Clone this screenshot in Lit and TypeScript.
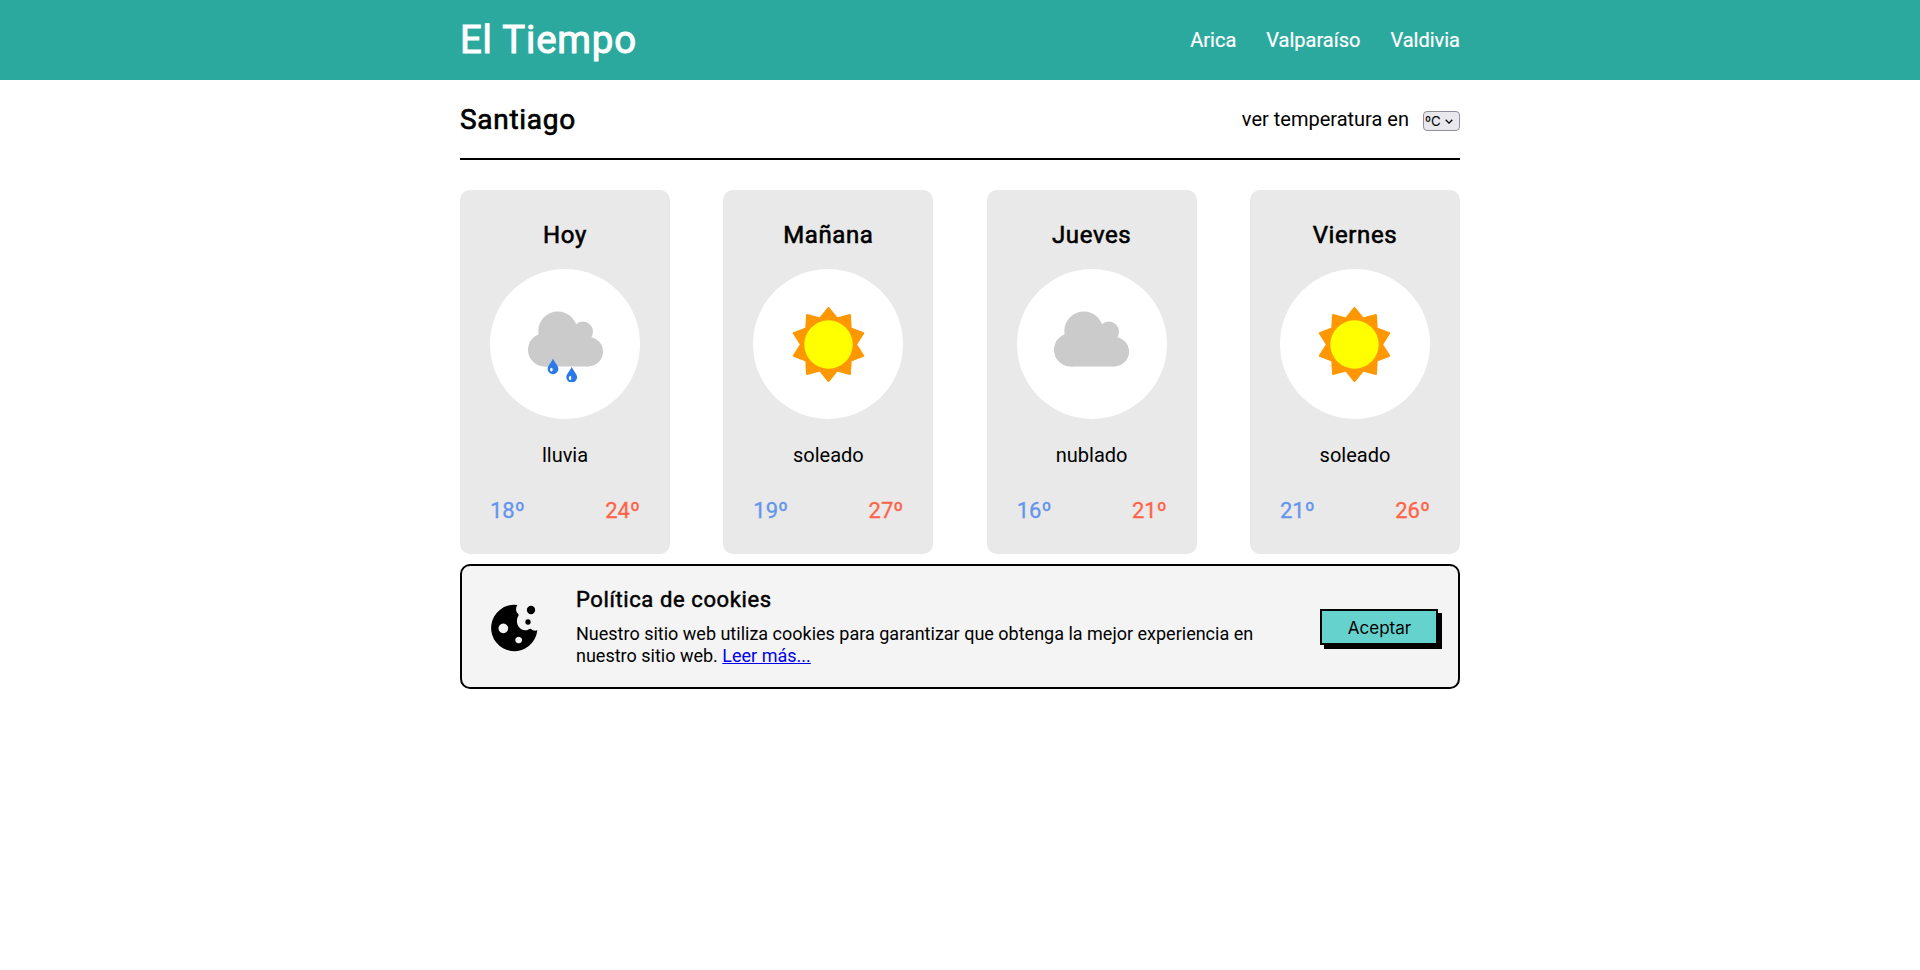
import { LitElement, html, css, svg } from "lit";
import { customElement, property } from "lit/decorators.js";

type Sky = "lluvia" | "soleado" | "nublado";

interface Forecast {
  day: string;
  sky: Sky;
  min: number;
  max: number;
}

const FORECAST: Forecast[] = [
  { day: "Hoy", sky: "lluvia", min: 18, max: 24 },
  { day: "Mañana", sky: "soleado", min: 19, max: 27 },
  { day: "Jueves", sky: "nublado", min: 16, max: 21 },
  { day: "Viernes", sky: "soleado", min: 21, max: 26 },
];

const CITIES = ["Arica", "Valparaíso", "Valdivia"];

const sunPoints = Array.from({ length: 20 }, (_, i) => {
  const r = i % 2 === 0 ? 36.6 : 27.6;
  const a = (i * Math.PI) / 10 - Math.PI / 2;
  return `${(37.5 + r * Math.cos(a)).toFixed(2)},${(37.5 + r * Math.sin(a)).toFixed(2)}`;
}).join(" ");

const sun = svg`
  <polygon points=${sunPoints} fill="#ff9800" stroke="#ff9800" stroke-width="1.8" stroke-linejoin="round"/>
  <circle cx="37.5" cy="37.5" r="24.2" fill="#ffff00"/>`;

const cloud = svg`
  <g fill="#cbcbcb">
    <circle cx="29.8" cy="24" r="19.5"/>
    <circle cx="54.9" cy="24.7" r="10.1"/>
    <circle cx="16.6" cy="42.8" r="16.6"/>
    <circle cx="60.3" cy="44.7" r="14.7"/>
    <path d="M16.6 59.4V30L29 24l26 1 5.3 8v26.4z"/>
  </g>`;

const drop = (x: number, y: number) => svg`
  <path transform="translate(${x} ${y})" fill="#2979e8"
    d="M0 0C1.4 4 5.4 7 5.4 10.4A5.4 5.4 0 0 1-5.4 10.4C-5.4 7-1.4 4 0 0z"/>
  <ellipse cx=${x - 1.6} cy=${y + 11.2} rx="1.3" ry="1.9" fill="#fff"/>`;

const skyIcon = (sky: Sky) => {
  if (sky === "soleado") return sun;
  if (sky === "nublado") return cloud;
  return svg`${cloud}${drop(25, 51.4)}${drop(43.7, 59.8)}`;
};

@customElement("forecast-card")
export class ForecastCard extends LitElement {
  @property({ attribute: false }) forecast!: Forecast;

  static styles = css`
    :host {
      display: flex;
      flex-direction: column;
      align-items: center;
      box-sizing: border-box;
      width: 210px;
      height: 364px;
      padding: 31px 30px 28px;
      border-radius: 10px;
      background: #e9e9e9;
    }
    .day {
      margin: 0;
      font-size: 24px;
      font-weight: 400;
      line-height: 29px;
      letter-spacing: 0.6px;
      -webkit-text-stroke: 0.6px currentColor;
    }
    .disc {
      flex: none;
      display: grid;
      place-items: center;
      width: 150px;
      height: 150px;
      margin-top: 19px;
      border-radius: 50%;
      background: #fff;
    }
    .icon {
      display: block;
      width: 75px;
      height: 75px;
    }
    .sky {
      margin: 24px 0 0;
      font-size: 20px;
      line-height: 24px;
    }
    .temps {
      display: flex;
      justify-content: space-between;
      align-self: stretch;
      margin-top: 30px;
      font-size: 22px;
      line-height: 28px;
      -webkit-text-stroke: 0.3px currentColor;
    }
    .min {
      color: cornflowerblue;
    }
    .max {
      color: tomato;
    }
  `;

  render() {
    const f = this.forecast;
    return html`
      <h3 class="day">${f.day}</h3>
      <div class="disc">
        <svg class="icon" viewBox="0 0 75 75">${skyIcon(f.sky)}</svg>
      </div>
      <p class="sky">${f.sky}</p>
      <div class="temps">
        <span class="min">${f.min}º</span>
        <span class="max">${f.max}º</span>
      </div>
    `;
  }
}

@customElement("app-root")
export class AppRoot extends LitElement {
  static styles = css`
    :host {
      display: block;
      min-height: 100vh;
      background: #fff;
      color: #000;
      font-family: Roboto, "Liberation Sans", sans-serif;
      font-size: 20px;
    }
    .bar {
      background: #2ca99e;
      color: #fff;
    }
    .wrap {
      width: 1000px;
      margin: 0 auto;
    }
    .bar-inner {
      display: flex;
      align-items: center;
      justify-content: space-between;
      height: 80px;
    }
    .brand {
      margin: 0;
      padding-bottom: 2px;
      font-size: 38.4px;
      font-weight: 400;
      letter-spacing: 0.8px;
      -webkit-text-stroke: 1px currentColor;
    }
    .nav {
      display: flex;
      gap: 30px;
      -webkit-text-stroke: 0.2px currentColor;
    }
    .city-row {
      display: flex;
      align-items: center;
      justify-content: space-between;
      box-sizing: border-box;
      height: 80px;
      border-bottom: 2px solid #000;
    }
    .city {
      margin: 0;
      font-size: 28px;
      font-weight: 400;
      letter-spacing: 0.7px;
      -webkit-text-stroke: 0.7px currentColor;
    }
    .units {
      display: flex;
      align-items: center;
      gap: 14px;
    }
    .unit {
      display: flex;
      align-items: center;
      justify-content: space-between;
      box-sizing: border-box;
      width: 37px;
      height: 20px;
      margin-top: 4px;
      padding: 0 6px 0 1px;
      border: 1px solid #8f8f9d;
      border-radius: 4px;
      background: #e9e9ed;
      font-family: Inter, sans-serif;
      font-size: 13.33px;
    }
    .chevron {
      width: 8px;
      height: 5px;
    }
    .cards {
      display: flex;
      justify-content: space-between;
      margin-top: 30px;
    }
    .cookies {
      display: flex;
      align-items: center;
      box-sizing: border-box;
      height: 125px;
      margin-top: 10px;
      padding: 0 20px 0 29px;
      border: 2px solid #000;
      border-radius: 10px;
      background: #f4f4f4;
    }
    .cookie {
      flex: none;
      width: 48px;
      height: 48px;
      margin: 2px 37px 0 0;
    }
    .policy {
      width: 704px;
    }
    .policy-title {
      margin: 0 0 10px;
      font-size: 22px;
      font-weight: 400;
      line-height: 26px;
      letter-spacing: 0.6px;
      -webkit-text-stroke: 0.5px currentColor;
    }
    .policy-text {
      margin: 0;
      font-size: 18px;
      line-height: 22px;
    }
    .more {
      color: #0000ee;
    }
    .accept {
      width: 118px;
      height: 36px;
      margin-left: auto;
      padding: 2px 0 0 1px;
      border: 2px solid #000;
      background: #66d2ce;
      box-shadow: 4px 4px 0 #000;
      color: #000;
      font-family: Inter, sans-serif;
      font-size: 17px;
    }
  `;

  render() {
    return html`
      <header class="bar">
        <div class="wrap bar-inner">
          <h1 class="brand">El Tiempo</h1>
          <nav class="nav">${CITIES.map((c) => html`<span>${c}</span>`)}</nav>
        </div>
      </header>
      <main class="wrap">
        <div class="city-row">
          <h2 class="city">Santiago</h2>
          <div class="units">
            <span>ver temperatura en</span>
            <span class="unit">
              ºC
              <svg class="chevron" viewBox="0 0 8 5">
                <path d="M.7.8 4 4.1 7.3.8" fill="none" stroke="#000" stroke-width="1.3" />
              </svg>
            </span>
          </div>
        </div>
        <section class="cards">
          ${FORECAST.map((f) => html`<forecast-card .forecast=${f}></forecast-card>`)}
        </section>
        <section class="cookies">
          <svg class="cookie" viewBox="33 43 144 144">
            <path
              fill-rule="evenodd"
              d="M112 46C107 54 107 62 111 69 116 72 118 77 113 82 106 101 116 121 136 122 143 123 147 116 153 117 158 123 165 124 172 122A69.5 69.5 0 1 1 112 46zM70 101.500a14.500 14.500 0 1 0 .01 0zM116 141a10 10 0 1 0 .01 0z"
            />
            <circle cx="153" cy="61" r="12.5" />
            <circle cx="144" cy="97" r="8" />
          </svg>
          <div class="policy">
            <h3 class="policy-title">Política de cookies</h3>
            <p class="policy-text">
              Nuestro sitio web utiliza cookies para garantizar que obtenga la mejor experiencia en
              nuestro sitio web. <a class="more" href="#">Leer más...</a>
            </p>
          </div>
          <button class="accept">Aceptar</button>
        </section>
      </main>
    `;
  }
}
